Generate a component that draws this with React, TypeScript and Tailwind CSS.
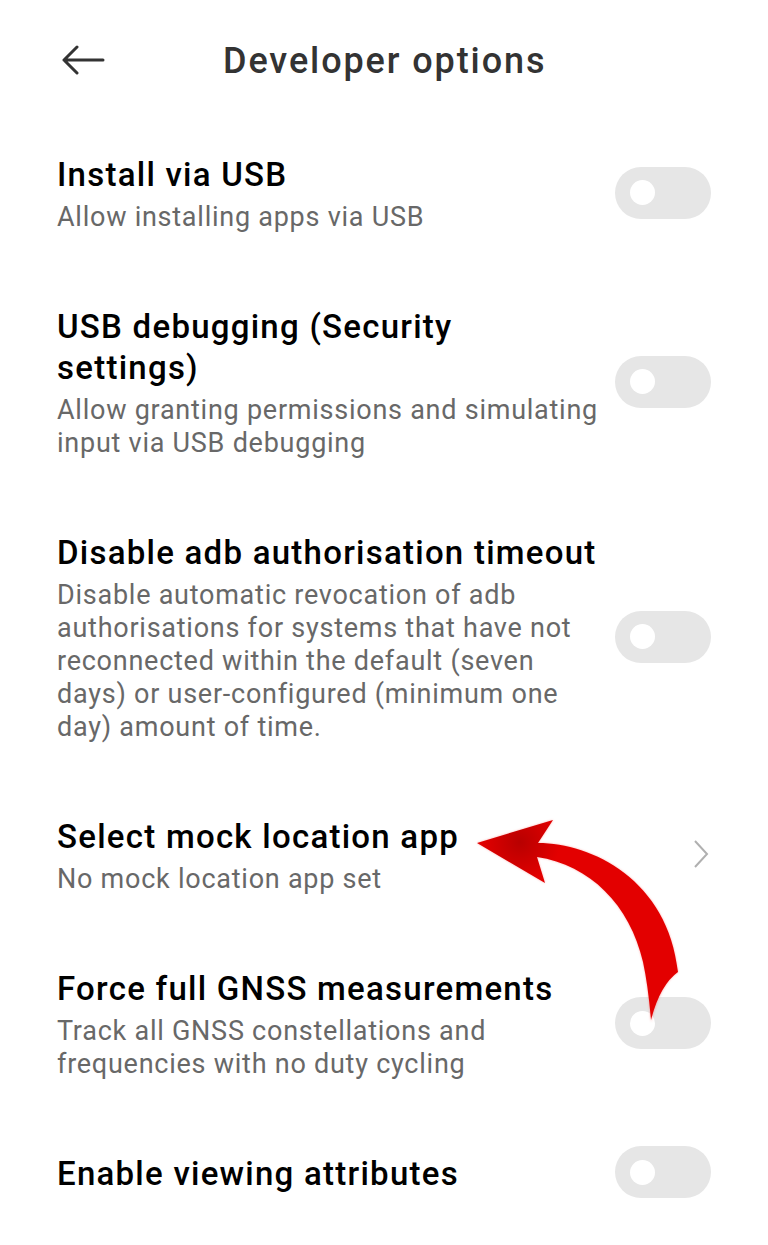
import React from "react";

type Row = {
  title: string[];
  subtitle?: string[];
  kind: "toggle" | "chevron";
};

const rows: Row[] = [
  { title: ["Install via USB"], subtitle: ["Allow installing apps via USB"], kind: "toggle" },
  {
    title: ["USB debugging (Security", "settings)"],
    subtitle: ["Allow granting permissions and simulating", "input via USB debugging"],
    kind: "toggle",
  },
  {
    title: ["Disable adb authorisation timeout"],
    subtitle: [
      "Disable automatic revocation of adb",
      "authorisations for systems that have not",
      "reconnected within the default (seven",
      "days) or user-configured (minimum one",
      "day) amount of time.",
    ],
    kind: "toggle",
  },
  { title: ["Select mock location app"], subtitle: ["No mock location app set"], kind: "chevron" },
  {
    title: ["Force full GNSS measurements"],
    subtitle: ["Track all GNSS constellations and", "frequencies with no duty cycling"],
    kind: "toggle",
  },
  { title: ["Enable viewing attributes"], kind: "toggle" },
];

function Toggle() {
  return (
    <div className="h-[41px] flex items-center shrink-0 -mt-[3px]">
      <div className="w-[96px] h-[52px] rounded-full bg-[#e6e6e6] flex items-center pl-[15px] shrink-0">
        <div className="w-[25px] h-[25px] rounded-full bg-white" />
      </div>
    </div>
  );
}

function Chevron() {
  return (
    <div className="w-[96px] flex justify-end shrink-0 -mt-[4px]">
      <svg width="18" height="30" viewBox="0 0 18 30" className="mr-[1px]">
        <path d="M3 2 L15 15 L3 28" fill="none" stroke="#b0b0b0" strokeWidth="2" />
      </svg>
    </div>
  );
}

export default function App() {
  return (
    <div
      className="relative w-[768px] h-[1245px] bg-white overflow-hidden"
      style={{ fontFamily: "Roboto, 'Noto Sans', sans-serif" }}
    >
      <div className="h-[118px] flex items-center pl-[62px] relative">
        <svg width="44" height="32" viewBox="0 0 44 32" className="mt-[1px]">
          <path d="M2 16 H41 M15 3 L2 16 L15 29" fill="none" stroke="#333333" strokeWidth="3" strokeLinecap="round" strokeLinejoin="round" />
        </svg>
        <div className="ml-[117px] mt-[3px] text-[36px] tracking-[1.9px] font-medium text-[#333333] leading-none">Developer options</div>
      </div>

      <div className="flex flex-col">
        {rows.map((r, i) => (
          <div key={i} className="flex items-center justify-between pl-[57px] pr-[57px] py-[36px]">
            <div className="flex flex-col">
              <div className="text-[33px] tracking-[1.25px] font-medium text-black leading-[41px]">
                {r.title.map((t, j) => (
                  <div key={j} className="whitespace-nowrap">{t}</div>
                ))}
              </div>
              {r.subtitle && (
                <div className="mt-[6px] text-[27px] tracking-[0.75px] text-[#686868] leading-[33px]">
                  {r.subtitle.map((t, j) => (
                    <div key={j} className="whitespace-nowrap">{t}</div>
                  ))}
                </div>
              )}
            </div>
            {r.kind === "toggle" ? <Toggle /> : <Chevron />}
          </div>
        ))}
      </div>

      <svg
        className="absolute left-0 top-0 pointer-events-none"
        width="768"
        height="1245"
        viewBox="0 0 768 1245"
      >
        <defs>
          <radialGradient id="hd" cx="520" cy="842" r="40" gradientUnits="userSpaceOnUse">
            <stop offset="0" stopColor="#b80000" />
            <stop offset="1" stopColor="#e30000" />
          </radialGradient>
          <filter id="gl" x="-20%" y="-20%" width="140%" height="140%">
            <feGaussianBlur stdDeviation="1.2" />
          </filter>
        </defs>
        <path
          d="M477 843 L553 820 L538 843 C592 843 668 880 678 972 Q660 985 651 1022 Q648 985 643 962 C630 905 590 865 537 857 L545 883 Z"
          fill="#ff6060"
          opacity="0.5"
          filter="url(#gl)"
        />
        <path
          d="M477 843 L553 820 L538 843 C592 843 668 880 678 972 Q660 985 651 1020 Q648 985 643 962 C630 905 590 865 537 857 L545 883 Z"
          fill="url(#hd)"
        />
      </svg>
    </div>
  );
}
